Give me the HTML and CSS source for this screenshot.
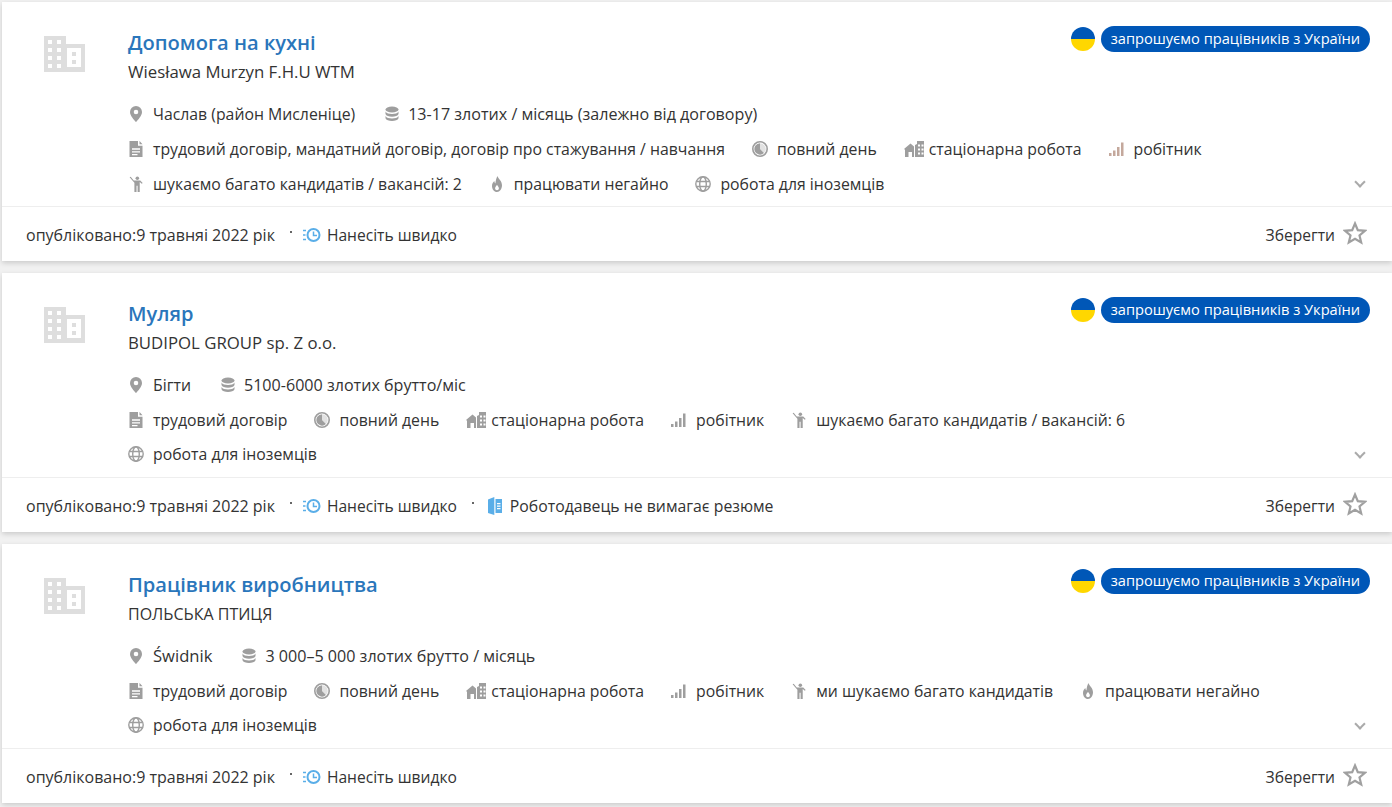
FILE: index.html
```html
<!DOCTYPE html>
<html lang="uk">
<head>
    <meta charset="UTF-8">
    <meta name="viewport" content="width=device-width, initial-scale=1.0">
    <title>Оферти роботи</title>
    <link rel="stylesheet" href="styles.css">
</head>
<body>
    <!-- Набір іконок -->
    <svg class="sprite" xmlns="http://www.w3.org/2000/svg">
        <symbol id="i-building" viewBox="0 0 41 36">
            <path fill-rule="evenodd" d="M0 0h22v8h19v28H0zM4 4v4h4V4zm9 0v4h4V4zM4 12v4h4v-4zm9 0v4h4v-4zM4 20v4h4v-4zm9 0v4h4v-4zM4 28v4h4v-4zm9 0v4h4v-4zm10-16v19h14V12zm5 4h4v4h-4zm0 8h4v4h-4z"/>
        </symbol>
        <symbol id="i-pin" viewBox="0 0 16 16">
            <path fill-rule="evenodd" d="M8 0a6 6 0 0 0-6 6c0 3.600 4 8 6 10 2-2 6-6.400 6-10a6 6 0 0 0-6-6zm0 3.700a2.300 2.300 0 1 1 0 4.600 2.300 2.300 0 0 1 0-4.600z"/>
        </symbol>
        <symbol id="i-coins" viewBox="0 0 16 16">
            <ellipse cx="9" cy="3.500" rx="6.500" ry="3"/>
            <path d="M2.500 5.500C3.500 7.300 6 8 9 8s5.500-.7 6.500-2.500v2.500C15 9.800 12 10.700 9 10.700S3 9.800 2.500 8z"/>
            <path d="M2.500 10C3.500 11.800 6 12.500 9 12.500s5.500-.7 6.500-2.500v2.300C15 14.100 12 15 9 15s-6-.9-6.500-2.700z"/>
        </symbol>
        <symbol id="i-doc" viewBox="0 0 16 16">
            <path fill-rule="evenodd" d="M1.500 0H10v4.800h4.500V16h-13zm10-.1 3 3.400h-3zM4 7.300v1.400h8V7.300zm0 2.900v1.400h8v-1.400zm0 2.800v1.300h5.500V13z"/>
        </symbol>
        <symbol id="i-clock" viewBox="0 0 17 17">
            <path fill-rule="evenodd" d="M8.500 0a8.500 8.500 0 1 1 0 17 8.500 8.500 0 0 1 0-17zm0 1.700a6.800 6.800 0 1 0 0 13.600 6.800 6.800 0 0 0 0-13.600z"/>
            <path d="M8.500 2.500a6 6 0 1 0 4.200 10.300L8.500 8.500z"/>
            <path opacity=".3" d="M8.500 2.500a6 6 0 0 1 4.200 10.300L8.500 8.500z"/>
        </symbol>
        <symbol id="i-house" viewBox="0 0 20 16">
            <path fill-rule="evenodd" d="M0 8 6.500 2.500 10 5.500V16H8v-5H4.500v5H1V8.800z"/>
            <path fill-rule="evenodd" d="M11 4l2-1V0h7v16h-9zm3-.500v2h2v-2zm3.500 0v2h2v-2zm-3.500 4v2h2v-2zm3.500 0v2h2v-2zm-3.500 4v2h2v-2zm3.500 0v2h2v-2z"/>
        </symbol>
        <symbol id="i-bars" viewBox="0 0 16 16">
            <rect x="0" y="12" width="2.500" height="3"/>
            <rect x="4" y="9.500" width="2.500" height="5.500"/>
            <rect x="8" y="6" width="2.500" height="9"/>
            <rect x="12" y="1.500" width="2.500" height="13.500"/>
        </symbol>
        <symbol id="i-person" viewBox="0 0 16 18">
            <circle cx="9.500" cy="2.500" r="2"/>
            <path d="M.8 1.500 2 .8l3.500 4.400h7.300L15.500 8l-1 .8-2.300-2.100V18H9.800v-7H8.600v7H6.200V7.600z"/>
        </symbol>
        <symbol id="i-fire" viewBox="0 0 16 16">
            <path fill-rule="evenodd" d="M8.500 0c.6 2.600 4.500 4.800 4.500 9.300C13 13 10.800 16 8 16s-5-2.600-5-6c0-2.400 1.200-3.900 2.300-5 .1 1.200.5 2 1.100 2.500C6.700 4.800 7.200 2 8.500 0zM8 9c-1 1.200-1.900 2.100-1.900 3.300 0 1.200.8 2 1.900 2s1.900-.8 1.900-2C9.900 11.100 9 10.200 8 9z"/>
        </symbol>
        <symbol id="i-globe" viewBox="0 0 16 16">
            <g fill="none" stroke="currentColor" stroke-width="1.400">
                <circle cx="8" cy="8" r="7.200"/>
                <ellipse cx="8" cy="8" rx="3.300" ry="7.200"/>
                <path d="M1.200 5.500h13.600M1.200 10.500h13.600"/>
            </g>
        </symbol>
        <symbol id="i-fast" viewBox="0 0 18 16">
            <g fill="none" stroke="currentColor" stroke-width="2">
                <circle cx="10.500" cy="8" r="6"/>
                <path stroke-width="1.500" d="M10.500 4.500V8.500H14"/>
                <path stroke-width="1.500" d="M0 3.500h3M0 8h2.500M0 12.500h3"/>
            </g>
        </symbol>
        <symbol id="i-cv" viewBox="0 0 14 18">
            <path d="M0 2.500 6.300 0v18L0 16z"/>
            <path fill-rule="evenodd" d="M7.500 2H14v14H7.500zm1.500 4v1.200h3.500V6zm0 2.500v1.200h3.500V8.500zm0 2.500v1.200h3.500V11z"/>
        </symbol>
        <symbol id="i-star" viewBox="0 0 24 24">
            <path fill="none" stroke="currentColor" stroke-width="2.200" stroke-linejoin="miter" d="m12 2.500 2.800 6.700 7.200.6-5.500 4.700 1.700 7-6.200-3.700-6.200 3.700 1.700-7L2 9.800l7.200-.6z"/>
        </symbol>
    </svg>

    <article class="offer">
        <div class="offer-main">
            <svg class="logo"><use href="#i-building"/></svg>
            <div class="offer-body">
                <div class="offer-head">
                    <div>
                        <h2 class="title">Допомога на кухні</h2>
                        <p class="company company-latin">Wiesława Murzyn F.H.U WTM</p>
                    </div>
                    <div class="invite">
                        <span class="flag"></span>
                        <span class="badge">запрошуємо працівників з України</span>
                    </div>
                </div>
                <ul class="facts">
                    <li><svg class="ico"><use href="#i-pin"/></svg>Часлав (район Мисленіце)</li>
                    <li class="salary"><svg class="ico"><use href="#i-coins"/></svg>13-17 злотих / місяць (залежно від договору)</li>
                    <li class="break"></li>
                    <li><svg class="ico"><use href="#i-doc"/></svg>трудовий договір, мандатний договір, договір про стажування / навчання</li>
                    <li><svg class="ico"><use href="#i-clock"/></svg>повний день</li>
                    <li><svg class="ico ico-wide"><use href="#i-house"/></svg>стаціонарна робота</li>
                    <li><svg class="ico ico-warm"><use href="#i-bars"/></svg>робітник</li>
                    <li class="break"></li>
                    <li><svg class="ico"><use href="#i-person"/></svg>шукаємо багато кандидатів / вакансій: 2</li>
                    <li><svg class="ico"><use href="#i-fire"/></svg>працювати негайно</li>
                    <li><svg class="ico"><use href="#i-globe"/></svg>робота для іноземців</li>
                </ul>
            </div>
            <span class="more"></span>
        </div>
        <footer class="offer-foot">
            <span class="date">опубліковано:9 травняі 2022 рік</span>
            <span class="dot"></span>
            <span class="flag-note"><svg class="ico-blue"><use href="#i-fast"/></svg>Нанесіть швидко</span>
            <span class="save">Зберегти<svg class="star"><use href="#i-star"/></svg></span>
        </footer>
    </article>

    <article class="offer">
        <div class="offer-main">
            <svg class="logo"><use href="#i-building"/></svg>
            <div class="offer-body">
                <div class="offer-head">
                    <div>
                        <h2 class="title">Муляр</h2>
                        <p class="company company-latin">BUDIPOL GROUP sp. Z o.o.</p>
                    </div>
                    <div class="invite">
                        <span class="flag"></span>
                        <span class="badge">запрошуємо працівників з України</span>
                    </div>
                </div>
                <ul class="facts">
                    <li><svg class="ico"><use href="#i-pin"/></svg>Бігти</li>
                    <li class="salary"><svg class="ico"><use href="#i-coins"/></svg>5100-6000 злотих брутто/міс</li>
                    <li class="break"></li>
                    <li><svg class="ico"><use href="#i-doc"/></svg>трудовий договір</li>
                    <li><svg class="ico"><use href="#i-clock"/></svg>повний день</li>
                    <li><svg class="ico ico-wide"><use href="#i-house"/></svg>стаціонарна робота</li>
                    <li><svg class="ico"><use href="#i-bars"/></svg>робітник</li>
                    <li><svg class="ico"><use href="#i-person"/></svg>шукаємо багато кандидатів / вакансій: 6</li>
                    <li class="break"></li>
                    <li class="short"><svg class="ico"><use href="#i-globe"/></svg>робота для іноземців</li>
                </ul>
            </div>
            <span class="more"></span>
        </div>
        <footer class="offer-foot">
            <span class="date">опубліковано:9 травняі 2022 рік</span>
            <span class="dot"></span>
            <span class="flag-note"><svg class="ico-blue"><use href="#i-fast"/></svg>Нанесіть швидко</span>
            <span class="dot"></span>
            <span class="flag-note flag-note-long"><svg class="ico-blue ico-cv"><use href="#i-cv"/></svg>Роботодавець не вимагає резюме</span>
            <span class="save">Зберегти<svg class="star"><use href="#i-star"/></svg></span>
        </footer>
    </article>

    <article class="offer">
        <div class="offer-main">
            <svg class="logo"><use href="#i-building"/></svg>
            <div class="offer-body">
                <div class="offer-head">
                    <div>
                        <h2 class="title">Працівник виробництва</h2>
                        <p class="company">ПОЛЬСЬКА ПТИЦЯ</p>
                    </div>
                    <div class="invite">
                        <span class="flag"></span>
                        <span class="badge">запрошуємо працівників з України</span>
                    </div>
                </div>
                <ul class="facts">
                    <li class="place-latin"><svg class="ico"><use href="#i-pin"/></svg>Świdnik</li>
                    <li class="salary"><svg class="ico"><use href="#i-coins"/></svg>3 000–5 000 злотих брутто / місяць</li>
                    <li class="break"></li>
                    <li><svg class="ico"><use href="#i-doc"/></svg>трудовий договір</li>
                    <li><svg class="ico"><use href="#i-clock"/></svg>повний день</li>
                    <li><svg class="ico ico-wide"><use href="#i-house"/></svg>стаціонарна робота</li>
                    <li><svg class="ico"><use href="#i-bars"/></svg>робітник</li>
                    <li><svg class="ico"><use href="#i-person"/></svg>ми шукаємо багато кандидатів</li>
                    <li><svg class="ico"><use href="#i-fire"/></svg>працювати негайно</li>
                    <li class="break"></li>
                    <li class="short"><svg class="ico"><use href="#i-globe"/></svg>робота для іноземців</li>
                </ul>
            </div>
            <span class="more"></span>
        </div>
        <footer class="offer-foot">
            <span class="date">опубліковано:9 травняі 2022 рік</span>
            <span class="dot"></span>
            <span class="flag-note"><svg class="ico-blue"><use href="#i-fast"/></svg>Нанесіть швидко</span>
            <span class="save">Зберегти<svg class="star"><use href="#i-star"/></svg></span>
        </footer>
    </article>
</body>
</html>
```

FILE: styles.css
```css
/* Фон сторінки */
html, body {
    margin: 0;
    padding: 0;
    height: 100%;
    overflow: hidden;
}

body {
    background: #f1f1f1;
    padding: 2px 0 0 2px;
    box-sizing: border-box;
    font-family: "Open Sans", "Noto Sans", sans-serif;
    font-size: 16px;
    color: #333;
}

.sprite {
    display: none;
}

/* Картка оферти */
.offer {
    background: #fff;
    height: 259px;
    margin-bottom: 12px;
    box-shadow: 0 2px 5px rgba(0, 0, 0, 0.16);
    display: flex;
    flex-direction: column;
}

.offer-main {
    position: relative;
    flex: 1;
    min-height: 0;
    display: flex;
    padding: 24px 22px 0 42px;
}

.logo {
    flex: none;
    width: 41px;
    height: 36px;
    margin: 10px 43px 0 0;
    fill: #dedede;
}

.offer-body {
    flex: 1;
    min-width: 0;
}

.offer-head {
    display: flex;
    justify-content: space-between;
    align-items: flex-start;
}

.title {
    margin: 2px 0 0;
    font-size: 20.100px;
    font-weight: 600;
    line-height: 30px;
    color: #2a76bb;
}

.company {
    margin: 2px 0 0;
    font-size: 16px;
    line-height: 24px;
}

.company-latin {
    font-size: 16.800px;
}

.invite {
    display: flex;
    align-items: center;
    gap: 6px;
}

.flag {
    width: 24px;
    height: 24px;
    border-radius: 50%;
    background: linear-gradient(#0057b7 50%, #ffd700 50%);
}

.badge {
    height: 26px;
    line-height: 25px;
    padding: 0 10px;
    border-radius: 13px;
    background: #0057b7;
    color: #fff;
    font-size: 14.650px;
}

/* Рядки з умовами */
.facts {
    list-style: none;
    margin: 12px 0 0;
    padding: 0;
    display: flex;
    flex-wrap: wrap;
    column-gap: 27px;
    font-size: 15.800px;
}

.facts li {
    display: flex;
    align-items: center;
    height: 35px;
}

.facts .break {
    flex-basis: 100%;
    height: 0;
}

.facts .short {
    height: 33px;
}

.facts .salary {
    margin-left: 1px;
    font-size: 16.100px;
}

.facts .place-latin {
    font-size: 16.600px;
}

.ico {
    flex: none;
    width: 16px;
    height: 16px;
    margin-right: 9px;
    fill: #9e9e9e;
    color: #9e9e9e;
}

.ico-wide {
    width: 20px;
    margin-right: 5px;
}

.ico-warm {
    fill: #c4a89c;
}

.more {
    position: absolute;
    right: 28px;
    bottom: 20px;
    width: 6px;
    height: 6px;
    border-right: 2px solid #aaa;
    border-bottom: 2px solid #aaa;
    transform: rotate(45deg);
}

/* Нижня смуга картки */
.offer-foot {
    flex: none;
    height: 55px;
    border-top: 1px solid #eee;
    padding: 2px 25px 0 24px;
    box-sizing: border-box;
    display: flex;
    align-items: center;
}

.dot {
    width: 2px;
    height: 2px;
    border-radius: 50%;
    background: #333;
    margin: -6px 11px 0 15px;
}

.flag-note {
    display: flex;
    align-items: center;
    font-size: 15.600px;
}

.flag-note-long {
    font-size: 15.800px;
}

.ico-blue {
    flex: none;
    width: 18px;
    height: 16px;
    margin-right: 6px;
    fill: #5aaee8;
    color: #5aaee8;
}

.ico-cv {
    width: 14px;
    height: 18px;
    margin: 0 8px 0 3px;
}

.save {
    margin-left: auto;
    display: flex;
    align-items: center;
    gap: 8px;
    font-size: 15.600px;
}

.star {
    width: 24px;
    height: 24px;
    margin-top: -5px;
    color: #a0a0a0;
}
```
